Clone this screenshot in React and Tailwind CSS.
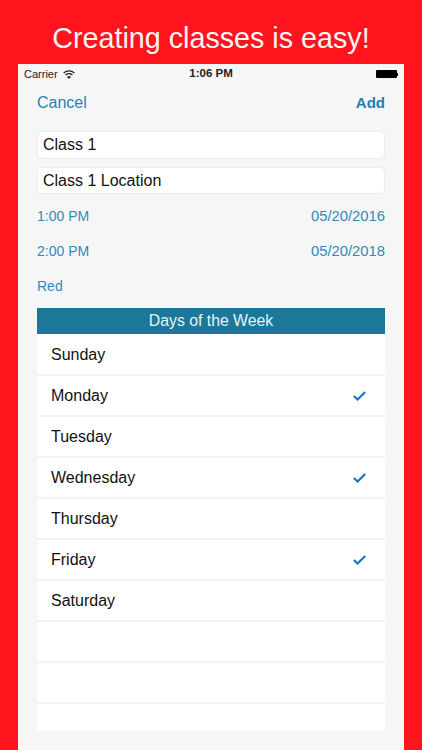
import React from 'react';

const days = [
    { name: 'Sunday' },
    { name: 'Monday', checked: true },
    { name: 'Tuesday' },
    { name: 'Wednesday', checked: true },
    { name: 'Thursday' },
    { name: 'Friday', checked: true },
    { name: 'Saturday' },
    { name: '' },
    { name: '' },
];

const Check = () => (
    <svg width="13" height="10" viewBox="0 0 13 10" fill="none" className="mr-[5px]">
        <path d="M0.8 5 L4.6 8.5 L12.2 1" stroke="#1a73d9" strokeWidth="2.2" />
    </svg>
);

const App = () => {
    return (
        <div className="w-[422px] h-[750px] overflow-hidden bg-[#ff141e] flex flex-col font-['Liberation_Sans',sans-serif]">
            <h1 className="h-[64px] pt-[20px] text-center text-[28.7px] leading-[36px] text-[#fdf3f3] font-normal">Creating classes is easy!</h1>

            <div className="mx-[18px] flex-1 bg-[#f6f6f6] flex flex-col overflow-hidden">
                <div className="h-[20px] px-[6px] flex items-center justify-between relative text-[11px] text-[#222]">
                    <div className="flex items-center gap-[5px]">
                        <span>Carrier</span>
                        <svg width="12" height="9" viewBox="0 0 12 9" fill="none" stroke="#222" strokeWidth="1.3">
                            <path d="M0.6 3.1 C3.6 0.2 8.4 0.2 11.4 3.1" />
                            <path d="M2.6 5 C4.5 3.3 7.5 3.3 9.4 5" />
                            <path d="M6 8.6 L4.4 6.9 C5.4 6.1 6.6 6.1 7.6 6.9 Z" fill="#222" strokeWidth="0.6" />
                        </svg>
                    </div>
                    <span className="absolute left-0 right-0 text-center text-[11.5px] font-bold">1:06 PM</span>
                    <div className="flex items-center">
                        <div className="w-[21px] h-[8px] bg-black rounded-[1px]"></div>
                        <div className="w-[1px] h-[3px] bg-black"></div>
                    </div>
                </div>

                <div className="h-[38px] px-[19px] flex items-center justify-between text-[16px] text-[#2384b4]">
                    <span>Cancel</span>
                    <span className="font-bold text-[15px] text-[#1f7fb0]">Add</span>
                </div>

                <div className="px-[19px] pt-[9px]">
                    <div className="h-[28px] px-[5px] flex items-center bg-white border border-[#ececec] rounded-[5px] text-[16px] text-[#111]">Class 1</div>
                    <div className="h-[27px] mt-[8px] px-[5px] flex items-center bg-white border border-[#ececec] rounded-[5px] text-[16px] text-[#111]">Class 1 Location</div>

                    <div className="h-[35px] mt-[5px] flex items-center justify-between text-[14px] text-[#2f8ab8]">
                        <span>1:00 PM</span>
                        <span className="text-[14.8px]">05/20/2016</span>
                    </div>
                    <div className="h-[35px] flex items-center justify-between text-[14px] text-[#2f8ab8]">
                        <span>2:00 PM</span>
                        <span className="text-[14.8px]">05/20/2018</span>
                    </div>
                    <div className="h-[35px] flex items-center text-[14px] text-[#2f8ab8]">Red</div>

                    <div className="h-[26px] mt-[4px] flex items-center justify-center bg-[#1c7898] text-[15.8px] text-[#e6f2f6]">Days of the Week</div>
                    <div className="flex flex-col bg-white">
                        {days.map((day, i) => (
                            <div key={i} className="h-[41px] first:h-[42px] first:pt-[2px] shrink-0 px-[14px] flex items-center justify-between bg-white border-b-2 border-[#f3f3f3] text-[16px] text-[#111]">
                                <span>{day.name}</span>
                                {day.checked && <Check />}
                            </div>
                        ))}
                        <div className="h-[27px] shrink-0 bg-white"></div>
                    </div>
                </div>
            </div>
        </div>
    );
};

export default App;
